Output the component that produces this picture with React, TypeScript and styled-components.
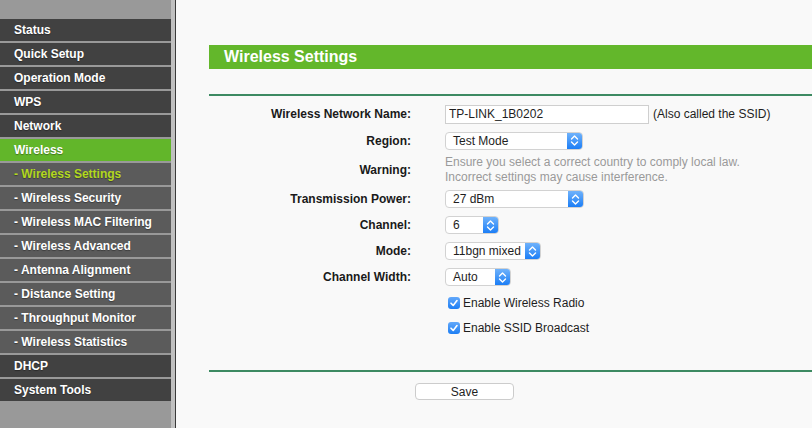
import styled, {createGlobalStyle} from 'styled-components';

type MenuItem = {
  label: string;
  sub?: boolean;
  active?: boolean;
};

const menu: MenuItem[] = [
  {label: 'Status'},
  {label: 'Quick Setup'},
  {label: 'Operation Mode'},
  {label: 'WPS'},
  {label: 'Network'},
  {label: 'Wireless', active: true},
  {label: '- Wireless Settings', sub: true, active: true},
  {label: '- Wireless Security', sub: true},
  {label: '- Wireless MAC Filtering', sub: true},
  {label: '- Wireless Advanced', sub: true},
  {label: '- Antenna Alignment', sub: true},
  {label: '- Distance Setting', sub: true},
  {label: '- Throughput Monitor', sub: true},
  {label: '- Wireless Statistics', sub: true},
  {label: 'DHCP'},
  {label: 'System Tools'},
];

function Chevrons() {
  return (
    <svg width="9" height="13" viewBox="0 0 9 13">
      <path
        d="M1.5 5 L4.5 2 L7.5 5 M1.5 8 L4.5 11 L7.5 8"
        fill="none"
        stroke="#fff"
        strokeWidth="1.4"
        strokeLinecap="round"
        strokeLinejoin="round"
      />
    </svg>
  );
}

function Select({value, width}: {value: string; width: number}) {
  return (
    <SelectBox $width={width}>
      <SelectValue>{value}</SelectValue>
      <SelectArrow>
        <Chevrons />
      </SelectArrow>
    </SelectBox>
  );
}

function Check({label}: {label: string}) {
  return (
    <CheckLabel>
      <CheckBox>
        <svg width="10" height="10" viewBox="0 0 10 10">
          <path
            d="M2 5.2 L4.2 7.4 L8 2.6"
            fill="none"
            stroke="#fff"
            strokeWidth="1.6"
            strokeLinecap="round"
            strokeLinejoin="round"
          />
        </svg>
      </CheckBox>
      {label}
    </CheckLabel>
  );
}

export default function App() {
  return (
    <>
      <GlobalStyle />
      <Page>
        <Sidebar>
          {menu.map(item => (
            <MenuRow key={item.label} $sub={item.sub} $active={item.active}>
              {item.label}
            </MenuRow>
          ))}
        </Sidebar>
        <Content>
          <Heading>Wireless Settings</Heading>
          <Divider />
          <Form>
            <Row>
              <Label>Wireless Network Name:</Label>
              <Value>
                <TextInput defaultValue="TP-LINK_1B0202" />
                <span>(Also called the SSID)</span>
              </Value>
            </Row>
            <Row $height={27}>
              <Label>Region:</Label>
              <Value>
                <Select value="Test Mode" width={138} />
              </Value>
            </Row>
            <Row $height={32}>
              <Label>Warning:</Label>
              <Hint>
                Ensure you select a correct country to comply local law.
                <br />
                Incorrect settings may cause interference.
              </Hint>
            </Row>
            <Row>
              <Label>Transmission Power:</Label>
              <Value>
                <Select value="27 dBm" width={139} />
              </Value>
            </Row>
            <Row>
              <Label>Channel:</Label>
              <Value>
                <Select value="6" width={54} />
              </Value>
            </Row>
            <Row>
              <Label>Mode:</Label>
              <Value>
                <Select value="11bgn mixed" width={96} />
              </Value>
            </Row>
            <Row>
              <Label>Channel Width:</Label>
              <Value>
                <Select value="Auto" width={66} />
              </Value>
            </Row>
            <Row $height={25}>
              <Label />
              <Value>
                <Check label="Enable Wireless Radio" />
              </Value>
            </Row>
            <Row>
              <Label />
              <Value>
                <Check label="Enable SSID Broadcast" />
              </Value>
            </Row>
          </Form>
          <Divider $gap={29} />
          <Actions>
            <SaveButton type="button">Save</SaveButton>
          </Actions>
        </Content>
      </Page>
    </>
  );
}

const GlobalStyle = createGlobalStyle`
  html, body {
    margin: 0;
    padding: 0;
    height: 100%;
    overflow: hidden;
  }
  body {
    font-family: "Liberation Sans", Arial, Helvetica, sans-serif;
    font-size: 12px;
    color: #1e1e1e;
    background: #f9f9f9;
  }
`;

const Page = styled.div`
  display: flex;
  height: 100vh;
`;

const Sidebar = styled.nav`
  width: 171px;
  flex-shrink: 0;
  display: flex;
  flex-direction: column;
  gap: 2px;
  padding-top: 19px;
  background: #999999;
  border-right: 4px solid #c0c0c0;
  box-shadow: 1px 0 0 #3a3a3a;
`;

const MenuRow = styled.div<{$sub?: boolean; $active?: boolean}>`
  height: 22px;
  line-height: 22px;
  padding-left: 14px;
  font-weight: bold;
  font-size: 12px;
  white-space: nowrap;
  text-shadow: 0 1px 1px rgba(0, 0, 0, 0.35);
  background: ${p =>
    p.$active && !p.$sub ? '#62b62a' : p.$sub ? '#5b5b5b' : '#414141'};
  color: ${p => (p.$active && p.$sub ? '#b2d81e' : '#ffffff')};
`;

const Content = styled.main`
  flex: 1;
  padding: 45px 0 0 32px;
  margin-left: 2px;
  background: #f9f9f9;
  overflow: hidden;
`;

const Heading = styled.h1`
  margin: 0;
  height: 24px;
  line-height: 24px;
  padding-left: 15px;
  background: #63b72b;
  color: #ffffff;
  font-size: 16px;
  font-weight: bold;
`;

const Divider = styled.div<{$gap?: number}>`
  margin-top: ${p => p.$gap ?? 25}px;
  height: 2px;
  background: #3d8a62;
`;

const Form = styled.div`
  display: flex;
  flex-direction: column;
  margin-top: 5px;
`;

const Row = styled.div<{$height?: number}>`
  display: flex;
  align-items: center;
  height: ${p => p.$height ?? 26}px;
`;

const Label = styled.div`
  width: 202px;
  flex-shrink: 0;
  padding-right: 34px;
  text-align: right;
  font-weight: bold;
  color: #1a1a1a;
`;

const Value = styled.div`
  display: flex;
  align-items: center;
  gap: 4px;
`;

const Hint = styled.div`
  color: #9a9a9a;
  line-height: 15px;
`;

const TextInput = styled.input`
  box-sizing: border-box;
  width: 204px;
  height: 19px;
  padding: 0 3px;
  border: 1px solid #cfcfcf;
  background: #ffffff;
  font-family: inherit;
  font-size: 12px;
  color: #1e1e1e;
  outline: none;
`;

const SelectBox = styled.div<{$width: number}>`
  box-sizing: border-box;
  display: flex;
  width: ${p => p.$width}px;
  height: 18px;
  border: 1px solid #d2d2d2;
  border-radius: 4px;
  background: #ffffff;
  overflow: hidden;
`;

const SelectValue = styled.span`
  flex: 1;
  padding-left: 7px;
  line-height: 16px;
  white-space: nowrap;
`;

const SelectArrow = styled.span`
  width: 15px;
  display: flex;
  align-items: center;
  justify-content: center;
  background: linear-gradient(#6fb2fb, #1c7ef6);
`;

const CheckLabel = styled.label`
  display: flex;
  align-items: center;
  gap: 3px;
  padding-left: 3px;
  font-size: 12px;
`;

const CheckBox = styled.span`
  width: 12px;
  height: 12px;
  border-radius: 3px;
  display: flex;
  align-items: center;
  justify-content: center;
  background: linear-gradient(#62a8fa, #1d7ef4);
`;

const Actions = styled.div`
  padding: 11px 0 0 206px;
`;

const SaveButton = styled.button`
  width: 99px;
  height: 17px;
  padding: 0;
  border: 1px solid #cccccc;
  border-radius: 4px;
  background: #ffffff;
  font-family: inherit;
  font-size: 12px;
  color: #1e1e1e;
`;
